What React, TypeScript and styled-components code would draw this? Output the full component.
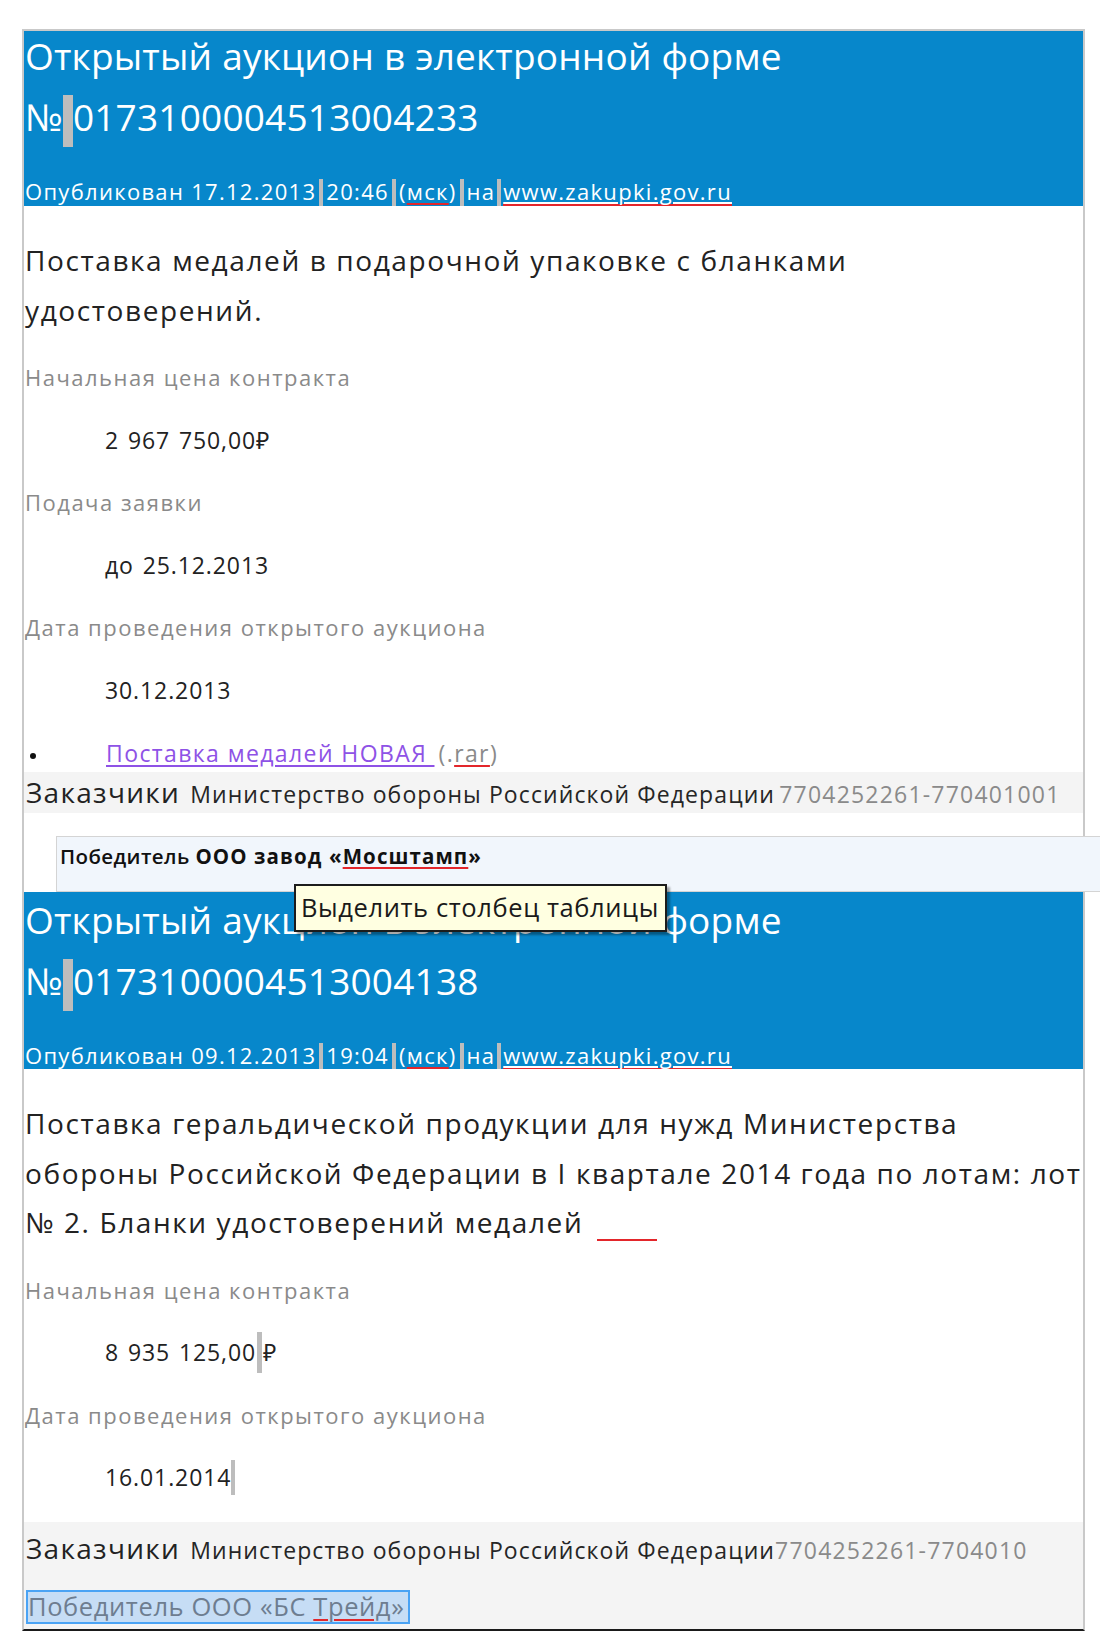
import React from 'react';
import styled, { createGlobalStyle } from 'styled-components';

const GlobalStyle = createGlobalStyle`
  html, body { margin: 0; padding: 0; background: #fff; }
  body { font-family: "Open Sans", "Noto Sans", sans-serif; color: #222; }
`;

const Page = styled.div`
  position: relative;
  width: 1100px;
  height: 1634px;
  overflow: hidden;
  box-sizing: border-box;
  padding: 29px 0 0 22px;
`;

const Panel = styled.div`
  width: 1063px;
  box-sizing: border-box;
  border: 2px solid #c9c9c9;
  border-bottom: 2px solid #1a1a1a;
`;

const Header = styled.header<{ $h: number }>`
  background: #0787cb;
  color: #fff;
  height: ${p => p.$h}px;
  padding-left: 1px;
  overflow: hidden;
`;

const Title = styled.h1<{ $shift: number }>`
  margin: ${p => p.$shift}px 0 0;
  font-size: 37px;
  font-weight: 400;
  line-height: 61px;
  letter-spacing: 0.2px;
  white-space: nowrap;
`;

const Published = styled.div`
  margin-top: 29px;
  font-size: 22px;
  line-height: 30px;
  letter-spacing: 1.3px;
  white-space: nowrap;
`;

const Mark = styled.span<{ $w: number; $h: number; $gap?: number }>`
  display: inline-block;
  width: ${p => p.$w}px;
  height: ${p => p.$h}px;
  margin: 0 ${p => p.$gap ?? 0}px;
  background: #bdbdbd;
  vertical-align: middle;
`;

const Spell = styled.span`
  text-decoration: underline;
  text-decoration-color: #e3262b;
  text-decoration-thickness: 2px;
  text-underline-offset: 3px;
`;

const SiteLink = styled.span`
  text-decoration: underline;
  text-decoration-color: #ffffff;
  text-decoration-thickness: 2px;
  text-underline-offset: 2px;
  box-shadow: inset 0 -2px 0 #e3262b;
`;

const Body = styled.div`
  padding-left: 1px;
`;

const Desc = styled.div`
  margin-top: 30px;
  font-size: 28px;
  line-height: 49.5px;
  letter-spacing: 1.6px;
  color: #222;
  white-space: nowrap;
`;

const Fields = styled.div`
  margin-top: 11px;
  display: flex;
  flex-direction: column;
`;

const Label = styled.div`
  height: 62.5px;
  line-height: 62.5px;
  font-size: 22px;
  letter-spacing: 1.5px;
  color: #8a8a8a;
`;

const Value = styled.div`
  height: 62.5px;
  line-height: 62.5px;
  padding-left: 80px;
  font-size: 23px;
  letter-spacing: 0.9px;
  word-spacing: 2px;
  color: #222;
  display: flex;
  align-items: center;
  white-space: pre;
`;

const FileRow = styled.div`
  display: flex;
  align-items: center;
  height: 51px;
  padding-top: 13px;
  box-sizing: border-box;
  font-size: 23px;
  line-height: 38px;
  white-space: pre;
`;

const Bullet = styled.span`
  width: 6px;
  height: 6px;
  border-radius: 50%;
  background: #111;
  margin: 6px 70px 0 5px;
`;

const FileLink = styled.a`
  color: #8e52e6;
  text-decoration: underline;
  text-decoration-color: #8e52e6;
  text-underline-offset: 3px;
  letter-spacing: 1.4px;
`;

const Ext = styled.span`
  color: #8a8a8a;
  letter-spacing: 1.4px;
  margin-left: 4px;
`;

const CustomerBand = styled.div<{ $tall?: boolean }>`
  background: #f4f4f4;
  margin-left: -1px;
  padding-left: 2px;
  ${p => (p.$tall ? 'margin-top: 13px; padding-bottom: 5px;' : '')}
`;

const CustomerLine = styled.div<{ $h: number }>`
  height: ${p => p.$h}px;
  line-height: ${p => p.$h}px;
  white-space: nowrap;
`;

const Big = styled.span`
  font-size: 28px;
  letter-spacing: 1.3px;
  color: #222;
  margin-right: 10px;
`;

const Org = styled.span`
  font-size: 23px;
  font-weight: 500;
  color: #262626;
  letter-spacing: 1.1px;
`;

const Inn = styled.span`
  font-size: 23px;
  letter-spacing: 1.2px;
  color: #8a8a8a;
`;

const WinnerCard = styled.div`
  margin: 23px 0 0 31px;
  width: 1045px;
  height: 56px;
  box-sizing: border-box;
  background: #f1f6fc;
  border: 1px solid #d4d4d4;
  border-right: none;
  padding: 5px 0 0 3px;
  font-size: 20.5px;
  line-height: 28px;
  white-space: nowrap;
  color: #111;
`;

const WinnerWord = styled.span`
  font-weight: 600;
  letter-spacing: 0.4px;
`;

const WinnerName = styled.span`
  font-weight: 700;
  letter-spacing: 1.1px;
`;

const WinnerSelected = styled.div`
  margin-top: 16px;
  width: 384px;
  height: 34px;
  box-sizing: border-box;
  background: #c6ddf5;
  border: 2px solid #4aa3f4;
  font-size: 25.5px;
  line-height: 29px;
  color: #6e7d90;
  letter-spacing: 0.6px;
  white-space: nowrap;
  overflow: hidden;
`;

const BlankLine = styled.span`
  display: inline-block;
  width: 60px;
  margin-left: 14px;
  border-bottom: 2px solid #e3262b;
  vertical-align: -8px;
`;

const Tooltip = styled.div`
  position: absolute;
  left: 294px;
  top: 884px;
  width: 373px;
  height: 48px;
  box-sizing: border-box;
  background: #ffffe1;
  border: 2px solid #1c1c1c;
  box-shadow: 3px 3px 2px rgba(0, 0, 0, 0.35);
  padding-left: 5px;
  font-size: 25.5px;
  line-height: 42px;
  color: #1a1a1a;
  letter-spacing: 0.6px;
  white-space: nowrap;
`;

type Field = { label: string; value: React.ReactNode };

function AuctionHeader({ no, date, time, h, shift }: { no: string; date: string; time: string; h: number; shift: number }) {
  return (
    <Header $h={h}>
      <Title $shift={shift}>
        Открытый аукцион в электронной форме
        <br />№<Mark $w={10} $h={52} />
        {no}
      </Title>
      <Published>
        Опубликован {date}
        <Mark $w={4} $h={30} $gap={3} />
        {time}
        <Mark $w={4} $h={30} $gap={3} />
        (<Spell>мск</Spell>)<Mark $w={4} $h={30} $gap={3} />
        на
        <Mark $w={4} $h={30} $gap={2} />
        <SiteLink>www.zakupki.gov.ru</SiteLink>
      </Published>
    </Header>
  );
}

function FieldList({ fields }: { fields: Field[] }) {
  return (
    <Fields>
      {fields.map(f => (
        <React.Fragment key={f.label}>
          <Label>{f.label}</Label>
          <Value>{f.value}</Value>
        </React.Fragment>
      ))}
    </Fields>
  );
}

export default function App() {
  const fields1: Field[] = [
    { label: 'Начальная цена контракта', value: '2 967 750,00₽' },
    { label: 'Подача заявки', value: 'до 25.12.2013' },
    { label: 'Дата проведения открытого аукциона', value: '30.12.2013' },
  ];
  const fields2: Field[] = [
    {
      label: 'Начальная цена контракта',
      value: (
        <>
          8 935 125,00
          <Mark $w={5} $h={41} $gap={1} />₽
        </>
      ),
    },
    {
      label: 'Дата проведения открытого аукциона',
      value: (
        <>
          16.01.2014
          <Mark $w={4} $h={35} />
        </>
      ),
    },
  ];

  return (
    <Page>
      <GlobalStyle />
      <Panel>
        <AuctionHeader no="0173100004513004233" date="17.12.2013" time="20:46" h={175} shift={-6} />
        <Body>
          <Desc>
            Поставка медалей в подарочной упаковке с бланками
            <br />
            удостоверений.
          </Desc>
          <FieldList fields={fields1} />
          <FileRow>
            <Bullet />
            <FileLink href="#">Поставка медалей НОВАЯ </FileLink>
            <Ext>
              (.<Spell>rar</Spell>)
            </Ext>
          </FileRow>
          <CustomerBand>
            <CustomerLine $h={41}>
              <Big>Заказчики</Big>
              <Org>Министерство обороны Российской Федерации</Org> <Inn>7704252261-770401001</Inn>
            </CustomerLine>
          </CustomerBand>
          <WinnerCard>
            <WinnerWord>Победитель </WinnerWord>
            <WinnerName>
              ООО завод «<Spell>Мосштамп</Spell>»
            </WinnerName>
          </WinnerCard>
        </Body>
        <AuctionHeader no="0173100004513004138" date="09.12.2013" time="19:04" h={177} shift={-3} />
        <Body>
          <Desc>
            Поставка геральдической продукции для нужд Министерства
            <br />
            обороны Российской Федерации в I квартале 2014 года по лотам: лот
            <br />№ 2. Бланки удостоверений медалей
            <BlankLine />
          </Desc>
          <FieldList fields={fields2} />
          <CustomerBand $tall>
            <CustomerLine $h={52}>
              <Big>Заказчики</Big>
              <Org>Министерство обороны Российской Федерации</Org>
              <Inn>7704252261-7704010</Inn>
            </CustomerLine>
            <WinnerSelected>
              Победитель ООО «БС <Spell>Трейд</Spell>»
            </WinnerSelected>
          </CustomerBand>
        </Body>
      </Panel>
      <Tooltip>Выделить столбец таблицы</Tooltip>
    </Page>
  );
}
